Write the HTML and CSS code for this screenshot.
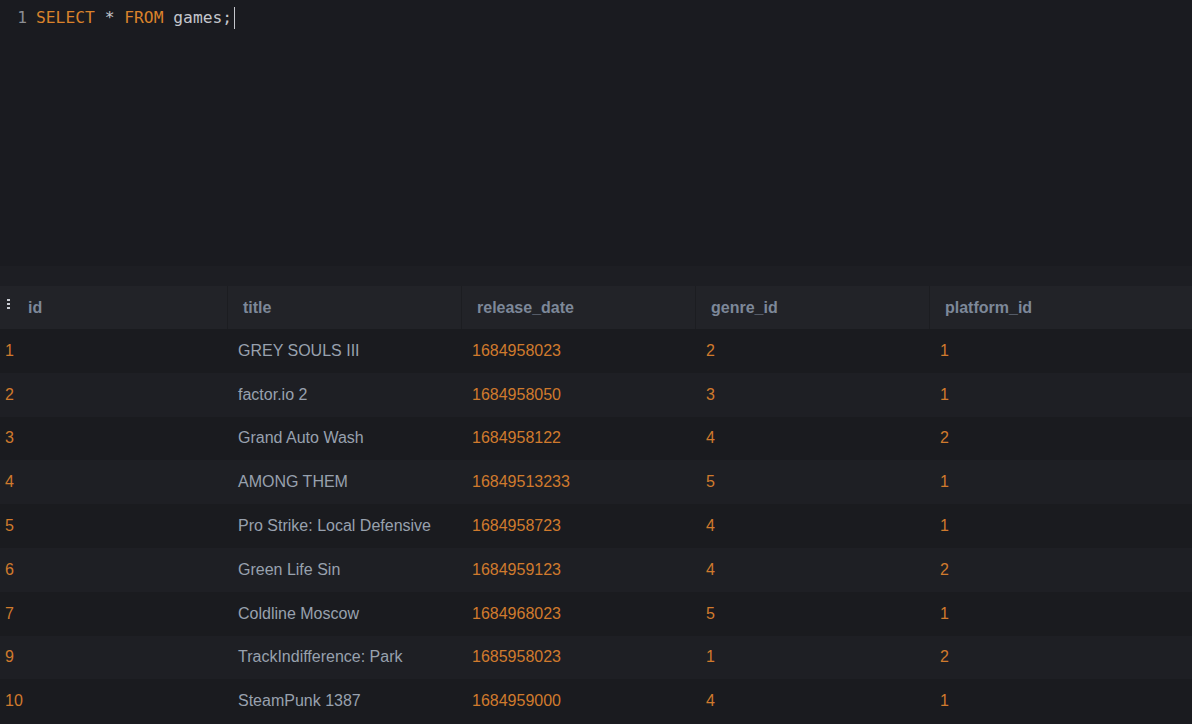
FILE: index.html
```html
<!DOCTYPE html>
<html>
<head>
<meta charset="utf-8">
<link rel="stylesheet" href="styles.css">
</head>
<body>
<div class="app">
  <div class="editor">
    <div class="line"><span class="ln">1</span><span class="code"><span class="kw">SELECT</span> * <span class="kw">FROM</span> games;<span class="cursor"></span></span></div>
  </div>
  <div class="band"></div>
  <div class="grid">
    <div class="row head">
      <div class="cell c1"><span class="kebab"><i></i><i></i><i></i></span>id</div>
      <div class="cell">title</div>
      <div class="cell">release_date</div>
      <div class="cell">genre_id</div>
      <div class="cell last">platform_id</div>
    </div>
    <div class="row"><div class="cell c1 num">1</div><div class="cell txt">GREY SOULS III</div><div class="cell num">1684958023</div><div class="cell num">2</div><div class="cell num last">1</div></div>
    <div class="row alt"><div class="cell c1 num">2</div><div class="cell txt">factor.io 2</div><div class="cell num">1684958050</div><div class="cell num">3</div><div class="cell num last">1</div></div>
    <div class="row"><div class="cell c1 num">3</div><div class="cell txt">Grand Auto Wash</div><div class="cell num">1684958122</div><div class="cell num">4</div><div class="cell num last">2</div></div>
    <div class="row alt"><div class="cell c1 num">4</div><div class="cell txt">AMONG THEM</div><div class="cell num">16849513233</div><div class="cell num">5</div><div class="cell num last">1</div></div>
    <div class="row"><div class="cell c1 num">5</div><div class="cell txt">Pro Strike: Local Defensive</div><div class="cell num">1684958723</div><div class="cell num">4</div><div class="cell num last">1</div></div>
    <div class="row alt"><div class="cell c1 num">6</div><div class="cell txt">Green Life Sin</div><div class="cell num">1684959123</div><div class="cell num">4</div><div class="cell num last">2</div></div>
    <div class="row"><div class="cell c1 num">7</div><div class="cell txt">Coldline Moscow</div><div class="cell num">1684968023</div><div class="cell num">5</div><div class="cell num last">1</div></div>
    <div class="row alt"><div class="cell c1 num">9</div><div class="cell txt">TrackIndifference: Park</div><div class="cell num">1685958023</div><div class="cell num">1</div><div class="cell num last">2</div></div>
    <div class="row"><div class="cell c1 num">10</div><div class="cell txt">SteamPunk 1387</div><div class="cell num">1684959000</div><div class="cell num">4</div><div class="cell num last">1</div></div>
  </div>
</div>
</body>
</html>
```
FILE: styles.css
```css
html, body {
  margin: 0;
  padding: 0;
  background: #1a1b20;
  overflow: hidden;
}
.app {
  width: 1192px;
  height: 724px;
  display: flex;
  flex-direction: column;
}
.editor {
  height: 266px;
  background: #1a1b20;
  padding-top: 7px;
  box-sizing: border-box;
}
.line {
  display: flex;
  font-family: "DejaVu Sans Mono", monospace;
  font-size: 16.3px;
  line-height: 22px;
  color: #c4c6cc;
}
.ln {
  width: 27px;
  text-align: right;
  padding-right: 9px;
  color: #8b8d93;
}
.kw { color: #d9822b; }
.cursor {
  display: inline-block;
  width: 1px;
  height: 22px;
  background: #c4c6cc;
  vertical-align: top;
  margin-left: 2px;
}
.band {
  height: 20px;
  background: #1d1e23;
}
.grid {
  display: flex;
  flex-direction: column;
  font-family: "Liberation Sans", Arial, sans-serif;
  font-size: 16px;
}
.row {
  display: flex;
  height: 43.8px;
  background: #1a1b1f;
}
.row.alt { background: #1e1f24; }
.row.head {
  height: 43px;
  background: #222328;
  font-weight: bold;
  color: #7d8899;
}
.cell {
  width: 234px;
  box-sizing: border-box;
  display: flex;
  align-items: center;
  padding-left: 11px;
  white-space: nowrap;
}
.cell.c1 { width: 227px; padding-left: 5px; }
.cell.last { flex: 1; }
.head .cell {
  padding-left: 15px;
  border-left: 1px solid #1c1d21;
}
.head .cell.c1 { padding-left: 7px; border-left: none; }
.num { color: #d07a2d; }
.txt { color: #98a1ae; }
.kebab {
  display: inline-flex;
  flex-direction: column;
  gap: 2px;
  margin-right: 18px;
  margin-top: -7px;
}
.kebab i {
  display: block;
  width: 3px;
  height: 2px;
  background: #c9ccd2;
}
```
